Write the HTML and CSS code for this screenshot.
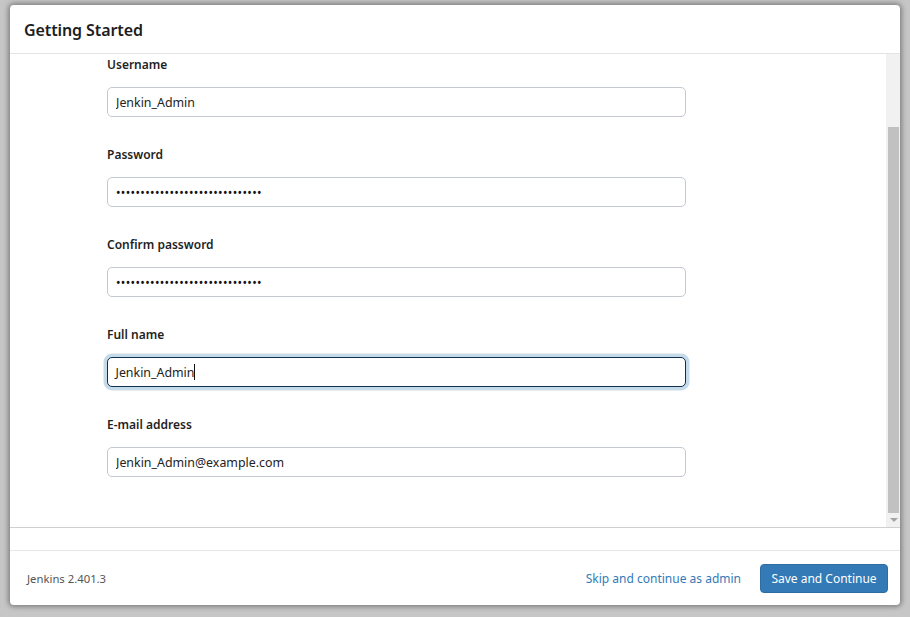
FILE: index.html
```
<!DOCTYPE html>
<html lang="en">
<head>
<meta charset="utf-8">
<title>Getting Started</title>
<link rel="stylesheet" href="styles.css">
</head>
<body>
<div class="backdrop">
  <div class="dialog">
    <div class="dialog-header">
      <h1 class="title">Getting Started</h1>
    </div>
    <div class="dialog-body">
      <form class="form">
        <div class="field">
          <label class="label" for="username">Username</label>
          <input class="input" id="username" type="text" value="Jenkin_Admin">
        </div>
        <div class="field">
          <label class="label" for="password1">Password</label>
          <input class="input" id="password1" type="password" value="Jenkin_Admin_Password_12345678">
        </div>
        <div class="field">
          <label class="label" for="password2">Confirm password</label>
          <input class="input" id="password2" type="password" value="Jenkin_Admin_Password_12345678">
        </div>
        <div class="field">
          <label class="label" for="fullname">Full name</label>
          <div class="input focused"><span>Jenkin_Admin</span><span class="caret"></span></div>
        </div>
        <div class="field">
          <label class="label" for="email">E-mail address</label>
          <input class="input" id="email" type="text" value="Jenkin_Admin@example.com">
        </div>
      </form>
      <div class="scrollbar">
        <div class="scroll-space"></div>
        <div class="scroll-thumb"></div>
        <div class="scroll-arrow"><span class="tri"></span></div>
      </div>
    </div>
    <div class="dialog-gap"></div>
    <div class="dialog-footer">
      <span class="version">Jenkins 2.401.3</span>
      <div class="actions">
        <a class="skip" href="#">Skip and continue as admin</a>
        <button class="btn-primary" type="button">Save and Continue</button>
      </div>
    </div>
  </div>
</div>
</body>
</html>
```
FILE: styles.css
```
* { box-sizing: border-box; }
html, body { margin: 0; padding: 0; }
body {
  width: 910px;
  height: 617px;
  overflow: hidden;
  font-family: "Noto Sans", "Open Sans", "DejaVu Sans", sans-serif;
  color: #222;
}
.backdrop {
  width: 910px;
  height: 617px;
  background: #c6c6c6;
  padding: 5px 10px 12px 10px;
}
.dialog {
  width: 890px;
  height: 600px;
  background: #fff;
  border-radius: 4px;
  box-shadow: 0 0 5px 2px rgba(0,0,0,0.35);
  display: flex;
  flex-direction: column;
  overflow: hidden;
}
.dialog-header {
  height: 49px;
  border-bottom: 1px solid #e4e4e4;
  display: flex;
  align-items: center;
  padding-left: 14px;
  padding-top: 1px;
}
.title {
  margin: 0;
  font-size: 16px;
  font-weight: 600;
  color: #1d1d1d;
  letter-spacing: -0.1px;
}
.dialog-body {
  height: 474px;
  border-bottom: 1px solid #cfcfcf;
  display: flex;
}
.form {
  flex: 1;
  padding: 2px 0 0 97px;
  margin: 0;
}
.field {
  display: flex;
  flex-direction: column;
  align-items: flex-start;
  padding-bottom: 29px;
}
.label {
  font-size: 12px;
  font-weight: 600;
  line-height: 18px;
  height: 18px;
  margin-bottom: 13px;
  color: #1f1f1f;
}
.input {
  width: 579px;
  height: 30px;
  border: 1px solid #c3c9cf;
  border-radius: 5px;
  padding: 0 8px;
  font-family: inherit;
  font-size: 12.4px;
  color: #222;
  background: #fff;
  outline: none;
  display: flex;
  align-items: center;
}
input[type="password"] {
  font-size: 12px;
  letter-spacing: 0.35px;
  color: #111;
}
.input.focused {
  border: 1.5px solid #0e2f4d;
  box-shadow: 0 0 0 3.5px #c6dbea;
  padding-left: 7.5px;
}
.caret {
  display: inline-block;
  width: 1px;
  height: 16px;
  background: #111;
}
.scrollbar {
  width: 14px;
  background: #f1f1f1;
  display: flex;
  flex-direction: column;
}
.scroll-space { height: 73px; }
.scroll-thumb {
  height: 386px;
  margin: 0 1px 0 2px;
  background: #c1c1c1;
}
.scroll-arrow {
  height: 14px;
  display: flex;
  align-items: center;
  justify-content: center;
}
.tri {
  width: 0;
  height: 0;
  border-left: 4px solid transparent;
  border-right: 4px solid transparent;
  border-top: 4px solid #a3a3a3;
  margin-left: 1px;
}
.dialog-gap {
  height: 23px;
  border-bottom: 1px solid #e6e6e6;
}
.dialog-footer {
  flex: 1;
  display: flex;
  align-items: center;
  justify-content: space-between;
  padding: 0 12px 0 17px;
}
.version {
  font-size: 11.3px;
  color: #555;
}
.actions {
  display: flex;
  align-items: center;
  gap: 19px;
}
.skip {
  font-size: 12px;
  color: #337ab7;
  text-decoration: none;
}
.btn-primary {
  width: 128px;
  height: 29px;
  background: #337ab7;
  color: #fff;
  border: 1px solid #2e6da4;
  border-radius: 4px;
  font-family: inherit;
  font-size: 12px;
  padding: 0;
}
```
